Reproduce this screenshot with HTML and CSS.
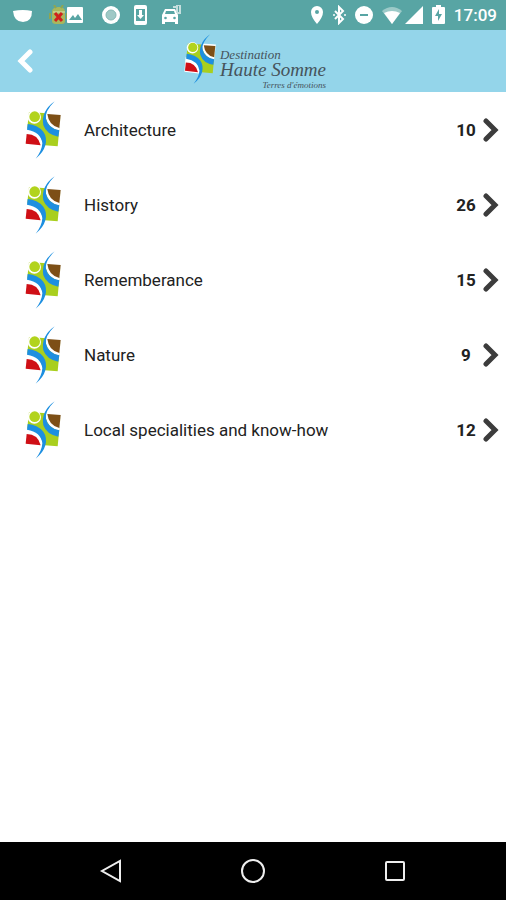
FILE: index.html
```html
<!DOCTYPE html>
<html lang="en">
	<head>
		<meta charset="utf-8" />
		<meta name="viewport" content="width=device-width, initial-scale=1">
		<title>Destination Haute Somme</title>
		<link rel="stylesheet" href="styles.css">
	</head>
	<body>
		<!-- shared shapes -->
		<svg class="defs" width="0" height="0" aria-hidden="true">
			<symbol id="logo" viewBox="0 0 138 180">
				<path d="M27 36L122 43L113 139L17 131Z" fill="#a9cf1e"/>
				<circle cx="43" cy="51" r="20" fill="#fff"/>
				<circle cx="44" cy="50" r="16" fill="#b2d31c"/>
				<path d="M74 36L124 40L118 92Q78 84 74 36Z" fill="#fff"/>
				<path d="M82 42L122 45L118 84Q86 76 82 42Z" fill="#7d4f16"/>
				<path d="M19 84Q64 90 72 141L15 134Z" fill="#fff"/>
				<path d="M20 102Q54 102 62 136L17 131Z" fill="#cf0f16"/>
				<path d="M23 72Q52 74 70 95Q82 112 76 136Q70 158 47 176Q66 152 67 130Q63 96 21 89Z" fill="#1d8fe0"/>
				<path d="M104 4Q74 34 78 56Q84 84 118 91L115 110Q80 104 70 76Q62 34 104 4Z" fill="#1d8fe0"/>
			</symbol>
			<symbol id="arrow" viewBox="0 0 16 24">
				<path d="M3 3L12 12L3 21" fill="none" stroke="#3c3c3c" stroke-width="5" stroke-linecap="round"/>
			</symbol>
		</svg>

		<div class="status">
			<div class="notices">
				<svg width="22" height="20" viewBox="0 0 22 20"><path d="M0 6Q10 4 19 6Q19 17 10 17Q1 17 0 6Z" fill="#fff"/></svg>
				<svg width="39" height="20" viewBox="0 0 39 20">
					<path d="M3 7Q3 2 10 2Q16 2 16 7V16Q16 19 13 19H7Q3 19 3 16Z" fill="#a9b75b"/>
					<path d="M1 8V14M18 8V14M5 0L7 3M14 0L12 3" stroke="#8fa552" stroke-width="2"/>
					<path d="M4 7H16" stroke="#dbe0ae"/>
					<path d="M6 8L13 16M13 8L6 16" stroke="#d0201c" stroke-width="3"/>
					<rect x="18" y="2" width="16" height="16" rx="1" fill="#fff"/>
					<path d="M20 15L24 10L26 13L29 9L33 15Z" fill="#58a5a4"/>
				</svg>
				<svg width="18" height="20" viewBox="0 0 18 20"><circle cx="9" cy="10" r="9" fill="#fff"/><circle cx="9" cy="10" r="5" fill="#9fc9c6" stroke="#85b9b5"/></svg>
				<svg width="14" height="20" viewBox="0 0 14 20">
					<rect x="0" y="0" width="13" height="20" rx="2" fill="#fff"/>
					<rect x="2" y="4" width="9" height="12" fill="#58a5a4"/>
					<path d="M5 5H8V10H10L6.500 14L3 10H5Z" fill="#fff"/>
				</svg>
				<svg width="20" height="20" viewBox="0 0 20 20">
					<path fill-rule="evenodd" d="M0 10L3 4H13L16 10V19H13V17H3V19H0ZM3 9H13L12 6H4Z" fill="#fff"/>
					<circle cx="3.500" cy="13" r="1.300" fill="#58a5a4"/><circle cx="12.500" cy="13" r="1.300" fill="#58a5a4"/>
					<path d="M11 2H15V8M14 0H18V8H15" fill="none" stroke="#c5dfde" stroke-width="2"/>
				</svg>
			</div>
			<div class="system">
				<svg width="14" height="20" viewBox="0 0 14 20"><path fill-rule="evenodd" d="M7 1A6 6 0 0 1 13 7Q13 12 7 19Q1 12 1 7A6 6 0 0 1 7 1ZM7 5A2 2 0 1 0 7 9A2 2 0 1 0 7 5Z" fill="#fff"/></svg>
				<svg width="13" height="20" viewBox="0 0 13 20"><path d="M2 6L10 14L6 18V2L10 6L2 14" fill="none" stroke="#fff" stroke-width="2"/><circle cx="1" cy="10" r="1" fill="#fff"/><circle cx="12" cy="10" r="1" fill="#fff"/></svg>
				<svg width="18" height="20" viewBox="0 0 18 20"><circle cx="9" cy="10" r="9" fill="#fff"/><path d="M5 10H13" stroke="#58a5a4" stroke-width="2"/></svg>
				<svg width="41" height="20" viewBox="0 0 41 20">
					<path d="M0 6Q10 -2 20 6L10 19Z" fill="#9ccac8"/>
					<path d="M2 8Q10 4 18 8L10 19Z" fill="#fff"/>
					<path d="M41 1V19H23Z" fill="#fff"/>
				</svg>
				<svg width="13" height="20" viewBox="0 0 13 20"><path d="M0 3Q0 2 1 2H4V0H9V2H12Q13 2 13 3V18Q13 19 12 19H1Q0 19 0 18Z" fill="#fff"/><path d="M7 4V9H10L6 16V11H3Z" fill="#58a5a4"/></svg>
				<span class="time">17:09</span>
			</div>
		</div>

		<header class="header">
			<button class="back" type="button" aria-label="Back">
				<svg width="16" height="24" viewBox="0 0 16 24"><path d="M13 3L4 12L13 21" fill="none" stroke="#fff" stroke-width="5" stroke-linecap="round"/></svg>
			</button>
			<div class="brand">
				<svg class="mark" width="40" height="52"><use href="#logo"/></svg>
				<div class="words">
					<span class="small">Destination</span>
					<span class="big">Haute Somme</span>
					<span class="tag">Terres d'émotions</span>
				</div>
			</div>
		</header>

		<main class="content">
			<ul class="list">
				<li>
					<a href="#architecture">
						<svg class="icon" width="46" height="60"><use href="#logo"/></svg>
						<span class="name">Architecture</span>
						<span class="count">10</span>
						<svg class="arrow" width="16" height="24"><use href="#arrow"/></svg>
					</a>
				</li>
				<li>
					<a href="#history">
						<svg class="icon" width="46" height="60"><use href="#logo"/></svg>
						<span class="name">History</span>
						<span class="count">26</span>
						<svg class="arrow" width="16" height="24"><use href="#arrow"/></svg>
					</a>
				</li>
				<li>
					<a href="#rememberance">
						<svg class="icon" width="46" height="60"><use href="#logo"/></svg>
						<span class="name">Rememberance</span>
						<span class="count">15</span>
						<svg class="arrow" width="16" height="24"><use href="#arrow"/></svg>
					</a>
				</li>
				<li>
					<a href="#nature">
						<svg class="icon" width="46" height="60"><use href="#logo"/></svg>
						<span class="name">Nature</span>
						<span class="count">9</span>
						<svg class="arrow" width="16" height="24"><use href="#arrow"/></svg>
					</a>
				</li>
				<li>
					<a href="#local">
						<svg class="icon" width="46" height="60"><use href="#logo"/></svg>
						<span class="name">Local specialities and know-how</span>
						<span class="count">12</span>
						<svg class="arrow" width="16" height="24"><use href="#arrow"/></svg>
					</a>
				</li>
			</ul>
		</main>

		<nav class="navbar">
			<button type="button" aria-label="Back"><svg width="24" height="24" viewBox="0 0 24 24"><path d="M21 2V22L3 12Z"/></svg></button>
			<button type="button" aria-label="Home"><svg width="24" height="24" viewBox="0 0 24 24"><circle cx="12" cy="12" r="11"/></svg></button>
			<button type="button" aria-label="Recent apps"><svg width="24" height="24" viewBox="0 0 24 24"><rect x="3" y="3" width="18" height="18" rx="1"/></svg></button>
		</nav>
	</body>
</html>
```
FILE: styles.css
```css
body,ul,li{
	margin: 0;
	padding: 0;
}
body{
	display: flex;
	flex-direction: column;
	min-height: 100vh;
	background: #fff;
	color: #222;
	font-family: Roboto, "Liberation Sans", sans-serif;
}
ul{
	list-style: none;
}
a{
	color: inherit;
	text-decoration: none;
}
button{
	padding: 0;
	border: 0;
	background: none;
	cursor: pointer;
}
svg{
	display: block;
	flex: none;
}
.defs{
	position: absolute;
}
/* status bar */
.status{
	display: flex;
	justify-content: space-between;
	align-items: center;
	height: 30px;
	padding: 0 9px 0 13px;
	background: #58a5a4;
}
.notices,.system{
	display: flex;
	align-items: center;
}
.notices{
	gap: 14px;
}
.system{
	gap: 9px;
}
.time{
	color: #fff;
	font-size: 17px;
	font-weight: 500;
	line-height: 20px;
}
/* header */
.header{
	display: grid;
	grid-template-columns: 48px 1fr 48px;
	height: 62px;
	background: #94d5ea;
}
.back{
	display: flex;
	align-items: center;
	padding-left: 17px;
}
.brand{
	display: flex;
	justify-content: center;
	padding-top: 3px;
}
.words{
	display: flex;
	flex-direction: column;
	padding-top: 15px;
	color: #46535b;
	font-family: "Liberation Serif", serif;
	font-style: italic;
}
.small{
	font-size: 13px;
	line-height: 14px;
}
.big{
	font-size: 19px;
	line-height: 16px;
}
.tag{
	align-self: flex-end;
	font-size: 9px;
	line-height: 14px;
}
/* list */
.list{
	padding-bottom: 16px;
}
.content{
	flex: 1;
}
.list a{
	display: flex;
	align-items: center;
	height: 75px;
	padding: 0 7px 0 20px;
}
.name{
	flex: 1;
	padding-left: 18px;
	font-size: 17px;
}
.count{
	width: 32px;
	margin-right: 1px;
	font-size: 17px;
	font-weight: 700;
	text-align: center;
}
/* bottom bar */
.navbar{
	display: flex;
	justify-content: center;
	gap: 118px;
	height: 58px;
	background: #000;
}
.navbar svg{
	fill: none;
	stroke: #eee;
	stroke-width: 2;
}
```
